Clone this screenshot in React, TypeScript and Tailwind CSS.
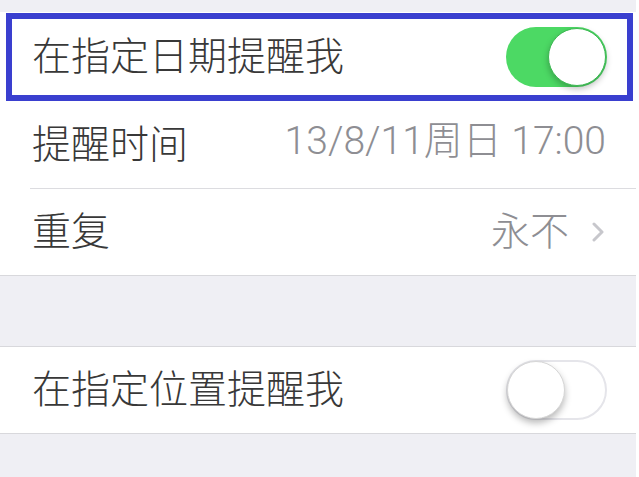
import React from "react";

const font = { fontFamily: '"Noto Sans CJK SC", sans-serif' };
const digitFont = { fontFamily: 'Roboto, "Noto Sans CJK SC", sans-serif' };

function ToggleOn() {
  return (
    <div className="relative h-[60px] w-[101px] rounded-full bg-[#4cd964]">
      <div className="absolute right-[1px] top-[1px] h-[58px] w-[58px] rounded-full border border-[#3cb852] bg-white shadow-[0_3px_6px_rgba(0,0,0,0.25)]" />
    </div>
  );
}

function ToggleOff() {
  return (
    <div className="relative h-[60px] w-[101px] rounded-full border-2 border-[#e5e5ea] bg-white">
      <div className="absolute left-[-1px] top-[-1px] h-[58px] w-[58px] rounded-full border border-[#d6d6d6] bg-white shadow-[0_4px_7px_rgba(0,0,0,0.28)]" />
    </div>
  );
}

function Chevron() {
  return (
    <svg width="12" height="20" viewBox="0 0 12 20" className="ml-[23px]">
      <path d="M2 2 L10 10 L2 18" fill="none" stroke="#c7c7cc" strokeWidth="3" strokeLinecap="round" strokeLinejoin="round" />
    </svg>
  );
}

export default function App() {
  return (
    <div className="flex h-[477px] w-[639px] bg-white" style={font}>
      <div className="flex w-[636px] flex-col bg-[#efeff4]">
        <div className="h-[12px]" />
        <div className="bg-white pl-[6px] pr-[3px] pt-[1px]">
          <div className="flex h-[88px] items-center justify-between border-[6px] border-[#3a3fcf] pl-[20px] pr-[20px]">
            <span className="pb-[7px] text-[39px] font-light leading-none text-[#383838]">在指定日期提醒我</span>
            <ToggleOn />
          </div>
        </div>
        <div className="bg-white">
          <div className="flex h-[87px] items-center justify-between pl-[32px] pr-[30px]">
            <span className="pb-[7px] text-[39px] font-light leading-none text-[#383838]">提醒时间</span>
            <span className="pb-[7px] text-[39px] font-light leading-none text-[#8e8e93]" style={digitFont}>13/8/11周日 17:00</span>
          </div>
          <div className="ml-[30px] h-px bg-[#dcdce0]" />
          <div className="flex h-[86px] items-center justify-between pl-[32px] pr-[32px]">
            <span className="pb-[7px] text-[39px] font-light leading-none text-[#383838]">重复</span>
            <div className="flex items-center">
              <span className="pb-[7px] text-[39px] font-light leading-none text-[#8e8e93]">永不</span>
              <Chevron />
            </div>
          </div>
        </div>
        <div className="h-px bg-[#d8d8dc]" />
        <div className="h-[70px]" />
        <div className="h-px bg-[#d8d8dc]" />
        <div className="flex h-[86px] items-center justify-between bg-white pl-[32px] pr-[29px]">
          <span className="pb-[7px] text-[39px] font-light leading-none text-[#383838]">在指定位置提醒我</span>
          <ToggleOff />
        </div>
        <div className="h-px bg-[#d8d8dc]" />
        <div className="flex-1" />
      </div>
      <div className="w-[3px] bg-white" />
    </div>
  );
}
